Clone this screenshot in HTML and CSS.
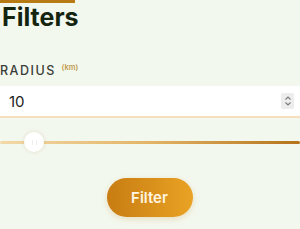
FILE: index.html
```html
<!DOCTYPE html>
<html>
<head>
<meta charset="utf-8">
<link rel="stylesheet" href="styles.css">
</head>
<body>
<div class="panel">
  <div class="title-wrap">
    <div class="title-bar"></div>
    <h1 class="title">Filters</h1>
  </div>
  <label class="label">RADIUS <sup class="unit">(km)</sup></label>
  <div class="input">
    <span class="value">10</span>
    <span class="spin">
      <svg width="8" height="12" viewBox="0 0 8 12"><path d="M1.5 4.5 L4 2 L6.5 4.5 M1.5 7.5 L4 10 L6.5 7.5" fill="none" stroke="#7a7a7a" stroke-width="1.1"/></svg>
    </span>
  </div>
  <div class="slider">
    <div class="track"></div>
    <div class="thumb"><span class="grip"></span></div>
  </div>
  <div class="actions">
    <button class="btn">Filter</button>
  </div>
</div>
</body>
</html>
```
FILE: styles.css
```css
* { box-sizing: border-box; }
html, body { margin: 0; padding: 0; }
body {
  background: #f3f8ef;
  font-family: Inter, "Noto Sans", sans-serif;
  width: 300px;
  height: 229px;
  overflow: hidden;
}
.panel { display: flex; flex-direction: column; }
.title-wrap { display: inline-flex; flex-direction: column; align-self: flex-start; }
.title-bar { height: 3px; background: #b87a14; width: 75px; }
.title {
  margin: 0;
  padding: 0 0 0 2px;
  font-size: 25px;
  font-weight: 700;
  line-height: 28px;
  color: #15240f;
  letter-spacing: 0;
}
.label {
  margin-top: 30px;
  font-size: 12.5px;
  font-weight: 500;
  letter-spacing: 1.5px;
  color: #3a3d37;
  line-height: 14px;
}
.unit {
  font-size: 7.5px;
  font-weight: 600;
  color: #c09a4a;
  letter-spacing: 0;
  vertical-align: 5px;
  margin-left: 1px;
}
.input {
  margin-top: 8px;
  height: 32px;
  background: #fff;
  border-bottom: 2px solid #f5dfbd;
  display: flex;
  align-items: center;
  justify-content: space-between;
  padding: 0 6px 0 9px;
}
.value { font-size: 15px; color: #1c1c1c; }
.spin {
  width: 13px;
  height: 16px;
  background: #ededed;
  border-radius: 2px;
  display: flex;
  align-items: center;
  justify-content: center;
}
.slider {
  position: relative;
  height: 20px;
  margin-top: 14px;
  display: flex;
  align-items: center;
}
.track {
  width: 100%;
  height: 3px;
  border-radius: 2px;
  background: linear-gradient(90deg, #f2d9a8 0%, #e3b466 50%, #b5731a 100%);
}
.thumb {
  position: absolute;
  left: 24px;
  top: 0;
  width: 20px;
  height: 20px;
  border-radius: 50%;
  background: #fff;
  box-shadow: 0 0 4px rgba(180,140,80,0.25);
  display: flex;
  align-items: center;
  justify-content: center;
}
.grip {
  width: 5px;
  height: 5px;
  border-left: 1px solid #eee;
  border-right: 1px solid #eee;
}
.actions { display: flex; justify-content: center; margin-top: 26px; padding-right: 1px; }
.btn {
  width: 86px;
  height: 39px;
  border: none;
  border-radius: 20px;
  background: linear-gradient(90deg, #c87c12 0%, #e9a324 100%);
  color: #fff5e2;
  font-family: Inter, "Noto Sans", sans-serif;
  font-size: 15px;
  font-weight: 600;
  box-shadow: 0 2px 6px rgba(200,140,40,0.25);
}
```
